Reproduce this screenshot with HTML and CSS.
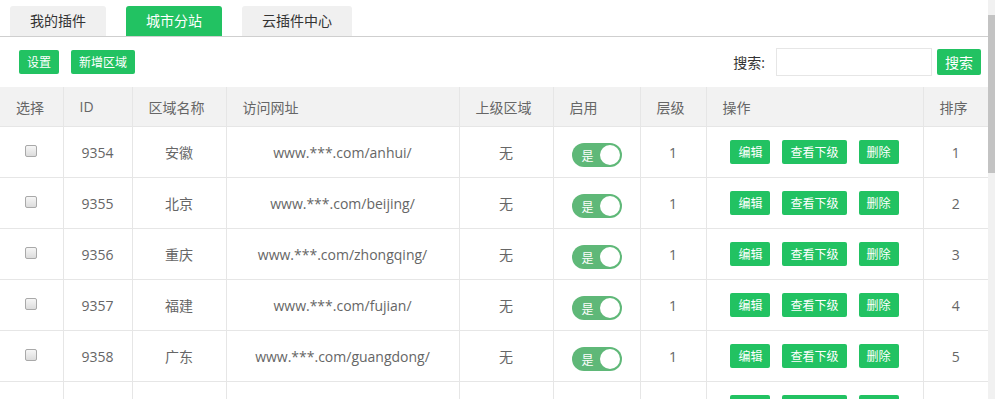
FILE: index.html
```html
<!DOCTYPE html>
<html lang="zh-CN">
<head>
<meta charset="utf-8">
<title>城市分站</title>
<link rel="stylesheet" href="styles.css">
</head>
<body>
<div class="page">
  <div class="main">
    <div class="tabs">
      <div class="tab">我的插件</div>
      <div class="tab active">城市分站</div>
      <div class="tab">云插件中心</div>
    </div>
    <div class="toolbar">
      <div class="left-tools">
        <button class="btn">设置</button>
        <button class="btn">新增区域</button>
      </div>
      <div class="search">
        <span class="search-label">搜索:</span>
        <input class="search-input" type="text">
        <button class="btn btn-search">搜索</button>
      </div>
    </div>
    <table class="grid">
      <colgroup>
        <col class="c-sel"><col class="c-id"><col class="c-name"><col class="c-url"><col class="c-parent"><col class="c-on"><col class="c-lvl"><col class="c-op"><col class="c-sort">
      </colgroup>
      <thead>
        <tr><th>选择</th><th>ID</th><th>区域名称</th><th>访问网址</th><th>上级区域</th><th>启用</th><th>层级</th><th>操作</th><th>排序</th></tr>
      </thead>
      <tbody>
        <tr><td><input type="checkbox" class="chk"></td><td>9354</td><td>安徽</td><td>www.***.com/anhui/</td><td>无</td><td><span class="switch">是<i class="knob"></i></span></td><td>1</td><td><div class="ops"><button class="btn">编辑</button><button class="btn">查看下级</button><button class="btn">删除</button></div></td><td>1</td></tr>
        <tr><td><input type="checkbox" class="chk"></td><td>9355</td><td>北京</td><td>www.***.com/beijing/</td><td>无</td><td><span class="switch">是<i class="knob"></i></span></td><td>1</td><td><div class="ops"><button class="btn">编辑</button><button class="btn">查看下级</button><button class="btn">删除</button></div></td><td>2</td></tr>
        <tr><td><input type="checkbox" class="chk"></td><td>9356</td><td>重庆</td><td>www.***.com/zhongqing/</td><td>无</td><td><span class="switch">是<i class="knob"></i></span></td><td>1</td><td><div class="ops"><button class="btn">编辑</button><button class="btn">查看下级</button><button class="btn">删除</button></div></td><td>3</td></tr>
        <tr><td><input type="checkbox" class="chk"></td><td>9357</td><td>福建</td><td>www.***.com/fujian/</td><td>无</td><td><span class="switch">是<i class="knob"></i></span></td><td>1</td><td><div class="ops"><button class="btn">编辑</button><button class="btn">查看下级</button><button class="btn">删除</button></div></td><td>4</td></tr>
        <tr><td><input type="checkbox" class="chk"></td><td>9358</td><td>广东</td><td>www.***.com/guangdong/</td><td>无</td><td><span class="switch">是<i class="knob"></i></span></td><td>1</td><td><div class="ops"><button class="btn">编辑</button><button class="btn">查看下级</button><button class="btn">删除</button></div></td><td>5</td></tr>
        <tr><td></td><td></td><td></td><td></td><td></td><td></td><td></td><td><div class="ops"><button class="btn">编辑</button><button class="btn">查看下级</button><button class="btn">删除</button></div></td><td></td></tr>
      </tbody>
    </table>
  </div>
  <div class="scrollbar"><div class="scroll-arrow"></div><div class="scroll-thumb"></div></div>
</div>
</body>
</html>
```
FILE: styles.css
```css
html, body {
  margin: 0;
  padding: 0;
  background: #fff;
  overflow: hidden;
  height: 399px;
}
body {
  font-family: "Open Sans", "Noto Sans CJK SC", sans-serif;
  font-size: 14px;
  color: #666;
}
.page {
  display: flex;
  width: 995px;
  height: 399px;
}
.main {
  width: 988px;
  flex: none;
}
.scrollbar {
  width: 7px;
  flex: none;
  background: #f1f1f1;
  display: flex;
  flex-direction: column;
}
.scroll-arrow {
  height: 15px;
}
.scroll-thumb {
  height: 158px;
  background: #c3c3c3;
}
.tabs {
  display: flex;
  gap: 20px;
  padding: 6px 0 0 10px;
  border-bottom: 1px solid #cfcfcf;
  height: 30px;
}
.tab {
  height: 30px;
  line-height: 30px;
  padding: 0 20px;
  background: #f0f0f0;
  color: #333;
  border-radius: 3px 3px 0 0;
  font-size: 14px;
}
.tab.active {
  background: #22c262;
  color: #fff;
}
.toolbar {
  height: 50px;
  display: flex;
  align-items: center;
  justify-content: space-between;
  padding: 0 7px 0 19px;
}
.left-tools {
  display: flex;
  gap: 12px;
}
.btn {
  font-family: "Noto Sans CJK SC", sans-serif;
  height: 24px;
  line-height: 24px;
  padding: 0 8px;
  border: none;
  border-radius: 2px;
  background: #22c262;
  color: #fff;
  font-size: 12px;
  cursor: pointer;
}
.search {
  display: flex;
  align-items: center;
}
.search-label {
  color: #333;
  font-size: 14px;
  margin-right: 11px;
}
.search-input {
  width: 156px;
  height: 28px;
  box-sizing: border-box;
  border: 1px solid #e6e6e6;
  margin: 0 5px 0 0;
  padding: 0 6px;
  outline: none;
}
.btn-search {
  height: 26px;
  line-height: 26px;
  font-size: 14px;
}
.grid {
  width: 988px;
  border-collapse: collapse;
  table-layout: fixed;
}
.c-sel { width: 63px; }
.c-id { width: 69px; }
.c-name { width: 94px; }
.c-url { width: 233px; }
.c-parent { width: 94px; }
.c-on { width: 87px; }
.c-lvl { width: 66px; }
.c-op { width: 217px; }
.c-sort { width: 65px; }
.grid th {
  height: 39px;
  padding: 0 0 0 16px;
  text-align: left;
  font-weight: normal;
  background: #f2f2f2;
  color: #666;
  border-left: 1px solid #e6e6e6;
  border-bottom: 1px solid #e6e6e6;
}
.grid th:first-child,
.grid td:first-child {
  border-left: none;
}
.grid td {
  height: 50px;
  padding: 0;
  text-align: center;
  vertical-align: middle;
  border-left: 1px solid #e6e6e6;
  border-bottom: 1px solid #e6e6e6;
  color: #666;
}
.chk {
  appearance: none;
  -webkit-appearance: none;
  width: 12px;
  height: 12px;
  margin: 0;
  border: 1px solid #a9a9a9;
  border-radius: 2px;
  background: linear-gradient(#f6f6f6, #dcdcdc);
  vertical-align: middle;
  position: relative;
  top: -3px;
}
.switch {
  display: inline-flex;
  align-items: center;
  justify-content: space-between;
  box-sizing: border-box;
  width: 50px;
  height: 24px;
  padding: 0 2px 0 10px;
  border-radius: 12px;
  background: #5fb878;
  color: #fff;
  font-family: "Noto Sans CJK SC", sans-serif;
  font-size: 12px;
  vertical-align: middle;
  position: relative;
  top: 3px;
}
.knob {
  width: 20px;
  height: 20px;
  border-radius: 50%;
  background: #fff;
}
.ops {
  display: flex;
  justify-content: center;
  gap: 12px;
}
```
